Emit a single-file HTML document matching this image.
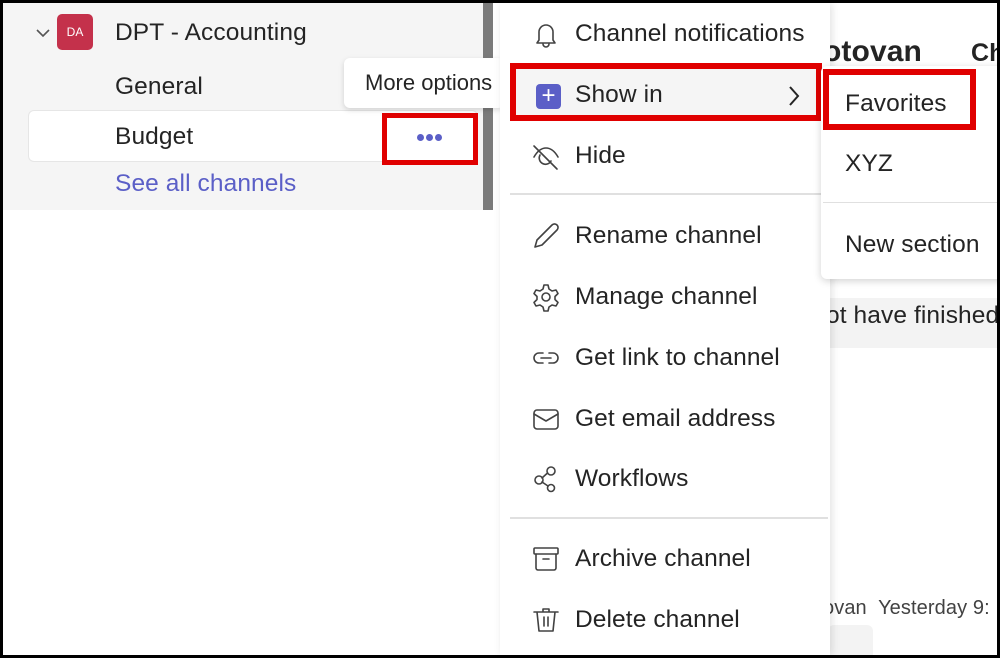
<!DOCTYPE html>
<html><head><style>
*{margin:0;padding:0;box-sizing:border-box}
body{width:1000px;height:658px;position:relative;overflow:hidden;background:#000;font-family:"Liberation Sans",sans-serif;color:#242424}
.frame{position:absolute;left:3px;top:3px;width:994px;height:652px;background:#fff;overflow:hidden}
.abs{position:absolute}
.t{position:absolute;font-size:24.5px;white-space:nowrap;letter-spacing:0.1px}
.ico{position:absolute;width:32px;height:32px}
.ico svg{width:32px;height:32px;fill:none;stroke:#424242;stroke-width:1.6;stroke-linecap:round;stroke-linejoin:round}
</style></head><body>
<div class="frame">
<div class="abs" style="left:0;top:0;width:480px;height:207px;background:#f5f5f5"></div>
<div class="abs" style="left:480px;top:0;width:10px;height:207px;background:#7b7b7b"></div>
<svg class="abs" style="left:32px;top:24px" width="16" height="12"><path d="M2 3 L8 9 L14 3" stroke="#555" stroke-width="1.6" fill="none"/></svg>
<div class="abs" style="left:54px;top:11px;width:36px;height:36px;background:#c4314b;border-radius:5px;color:#fff;font-size:12px;line-height:36px;text-align:center">DA</div>
<div class="t" style="left:112px;top:16px">DPT - Accounting</div>
<div class="t" style="left:112px;top:70px">General</div>
<div class="abs" style="left:25px;top:107px;width:450px;height:52px;background:#fff;border-radius:6px;border:1px solid #e6e6e6"></div>
<div class="t" style="left:112px;top:120px">Budget</div>
<div class="abs" style="left:379px;top:110px;width:96px;height:52px;border:5px solid #e00000;background:#fff"></div>
<div class="abs" style="left:414px;top:131px;width:26px;height:8px">
<span class="abs" style="left:0;top:0;width:7px;height:7px;border-radius:50%;background:#5b5fc7"></span>
<span class="abs" style="left:9px;top:0;width:7px;height:7px;border-radius:50%;background:#5b5fc7"></span>
<span class="abs" style="left:18px;top:0;width:7px;height:7px;border-radius:50%;background:#5b5fc7"></span>
</div>
<div class="t" style="left:112px;top:167px;color:#5b5fc7">See all channels</div>
<div class="abs" style="left:341px;top:55px;width:160px;height:50px;background:#fff;border-radius:6px;box-shadow:0 2px 6px rgba(0,0,0,.15)"></div>
<div class="t" style="left:362px;top:67px;font-size:22px;letter-spacing:0">More options</div>

<div class="abs" style="left:825px;top:192px;width:169px;height:1px;background:#e0e0e0"></div>
<div class="t" style="left:820px;top:32px;font-size:30px;font-weight:bold">otovan</div>
<div class="t" style="left:968px;top:36px;font-size:25px;font-weight:bold">Ch</div>
<div class="abs" style="left:825px;top:295px;width:169px;height:50px;background:#f3f3f3"></div>
<div class="t" style="left:823px;top:299px">ot have finished</div>
<div class="t" style="left:820px;top:594px;font-size:20px;color:#424242">ovan&nbsp;&nbsp;Yesterday 9:</div>
<div class="abs" style="left:825px;top:622px;width:45px;height:40px;background:#f3f3f3;border-radius:6px"></div>

<div class="abs" style="left:497px;top:0;width:330px;height:652px;background:#fff;box-shadow:2px 0 8px rgba(0,0,0,.12)"></div>
<div class="ico" style="left:527px;top:15px"><svg viewBox="0 0 32 32"><path d="M9 22 V14 a7 7 0 0 1 14 0 V22 l2 3 H7 Z M13 26 a3 3 0 0 0 6 0"/></svg></div>
<div class="t" style="left:572px;top:17px">Channel notifications</div>
<div class="abs" style="left:507px;top:60px;width:312px;height:58px;border:6px solid #e00000;background:#f5f5f5"></div>
<div class="abs" style="left:533px;top:81px;width:25px;height:25px;background:#5b5fc7;border-radius:4px;color:#fff;font-size:24px;line-height:24px;text-align:center">+</div>
<div class="t" style="left:572px;top:78px">Show in</div>
<svg class="abs" style="left:784px;top:82px" width="14" height="22"><path d="M3 2 L11 11 L3 20" stroke="#242424" stroke-width="2" fill="none"/></svg>
<div class="ico" style="left:527px;top:138px"><svg viewBox="0 0 32 32"><path d="M4 16 C8 9 12 7 16 7 S24 9 28 16 M10 14 a6 6 0 0 0 11 6 M4 5 L27 28"/></svg></div>
<div class="t" style="left:572px;top:139px">Hide</div>
<div class="abs" style="left:507px;top:190px;width:318px;height:2px;background:#e0e0e0"></div>
<div class="ico" style="left:527px;top:217px"><svg viewBox="0 0 32 32"><path d="M5 27 L7 20 L22 5 a3 3 0 0 1 5 5 L12 25 Z"/></svg></div>
<div class="t" style="left:572px;top:219px">Rename channel</div>
<div class="ico" style="left:527px;top:278px"><svg viewBox="0 0 32 32"><circle cx="16" cy="16" r="4"/><path d="M14 4 h4 l1 4 l3 2 l4-1 l2 3.5 l-3 3 v3 l3 3 l-2 3.5 l-4-1 l-3 2 l-1 4 h-4 l-1-4 l-3-2 l-4 1 l-2-3.5 l3-3 v-3 l-3-3 l2-3.5 l4 1 l3-2 Z"/></svg></div>
<div class="t" style="left:572px;top:280px">Manage channel</div>
<div class="ico" style="left:527px;top:339px"><svg viewBox="0 0 32 32"><path d="M13 11 H9 a5 5 0 0 0 0 10 H13 M19 11 H23 a5 5 0 0 1 0 10 H19 M11 16 H21"/></svg></div>
<div class="t" style="left:572px;top:341px">Get link to channel</div>
<div class="ico" style="left:527px;top:400px"><svg viewBox="0 0 32 32"><rect x="4" y="7" width="24" height="19" rx="3"/><path d="M4 11 L16 18 L28 11"/></svg></div>
<div class="t" style="left:572px;top:402px">Get email address</div>
<div class="ico" style="left:527px;top:460px"><svg viewBox="0 0 32 32"><circle cx="9" cy="17" r="4"/><circle cx="21" cy="8" r="4"/><circle cx="21" cy="25" r="3.5"/><path d="M12 15 L17.5 10 M12 19 L18 23"/></svg></div>
<div class="t" style="left:572px;top:462px">Workflows</div>
<div class="abs" style="left:507px;top:514px;width:318px;height:2px;background:#e0e0e0"></div>
<div class="ico" style="left:527px;top:540px"><svg viewBox="0 0 32 32"><rect x="4" y="5" width="24" height="6" rx="1"/><path d="M6 11 V25 a2 2 0 0 0 2 2 H24 a2 2 0 0 0 2-2 V11 M13 16 H19"/></svg></div>
<div class="t" style="left:572px;top:542px">Archive channel</div>
<div class="ico" style="left:527px;top:601px"><svg viewBox="0 0 32 32"><path d="M4 8 H28 M13 8 V5 H19 V8 M7 8 L9 27 H23 L25 8 M14 13 V22 M18 13 V22"/></svg></div>
<div class="t" style="left:572px;top:603px">Delete channel</div>

<div class="abs" style="left:818px;top:63px;width:190px;height:213px;background:#fff;border-radius:6px;box-shadow:0 2px 8px rgba(0,0,0,.18)"></div>
<div class="abs" style="left:820px;top:66px;width:153px;height:61px;border:6px solid #e00000"></div>
<div class="t" style="left:842px;top:87px">Favorites</div>
<div class="t" style="left:842px;top:147px">XYZ</div>
<div class="abs" style="left:820px;top:199px;width:180px;height:1px;background:#e0e0e0"></div>
<div class="t" style="left:842px;top:228px">New section</div>
</div>
</body></html>
